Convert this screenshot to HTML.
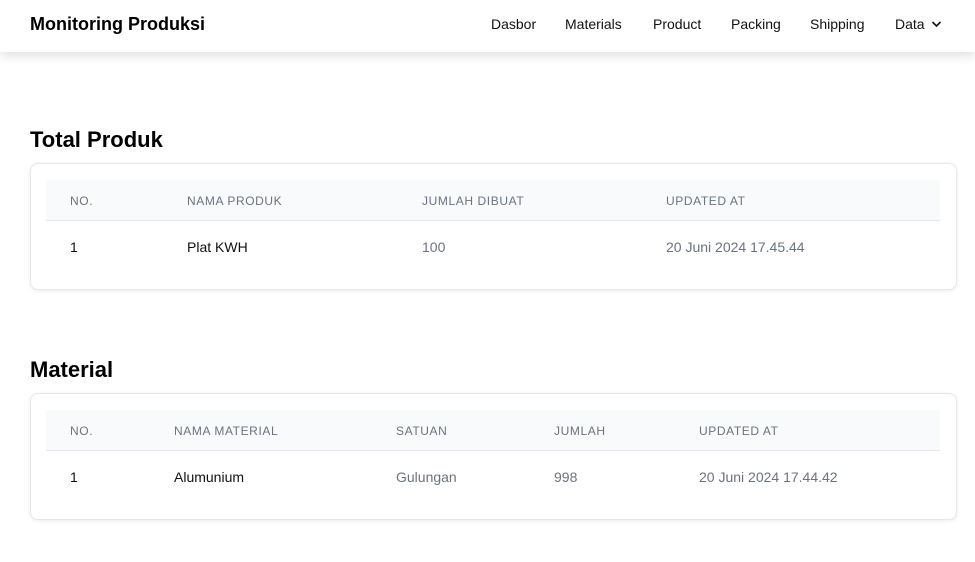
<!DOCTYPE html>
<html><head><meta charset="utf-8"><style>
*{margin:0;padding:0;box-sizing:border-box}
body{width:975px;height:562px;background:#fff;font-family:"Liberation Sans",sans-serif;position:relative;overflow:hidden;color:#111827}
.nav{position:absolute;left:0;top:0;width:975px;height:52px;background:#fff;box-shadow:0 4px 10px rgba(0,0,0,.12);z-index:2}
.t{position:absolute;white-space:nowrap;line-height:1}
.brand{left:30px;top:15px;font-size:18px;font-weight:bold;color:#000}
.ni{top:17px;font-size:14px;color:#111}
h2{position:absolute;left:30px;font-size:22px;font-weight:bold;color:#000;line-height:1}
.card{position:absolute;left:30px;width:927px;height:127px;border:1px solid #e5e7eb;border-radius:8px;box-shadow:0 1px 4px rgba(0,0,0,.08);background:#fff}
.hd{position:absolute;left:15px;top:16px;width:894px;height:41px;background:#f9fafb;border-bottom:1px solid #e5e7eb}
.h{font-size:12px;color:#6b7280;letter-spacing:.6px}
.c{font-size:14px;top:76px}
.g{color:#6b7280}
.b{color:#111;font-weight:500}
</style></head><body>
<div class="nav">
<div class="t brand">Monitoring Produksi</div>
<div class="t ni" style="left:491px">Dasbor</div>
<div class="t ni" style="left:565px">Materials</div>
<div class="t ni" style="left:653px">Product</div>
<div class="t ni" style="left:731px">Packing</div>
<div class="t ni" style="left:810px">Shipping</div>
<div class="t ni" style="left:895px">Data</div>
<svg style="position:absolute;left:931px;top:20px" width="11" height="8" viewBox="0 0 11 8"><path d="M1.5 2l4 4 4-4" fill="none" stroke="#111" stroke-width="1.6"/></svg>
</div>
<h2 style="top:129px">Total Produk</h2>
<div class="card" style="top:163px">
<div class="hd"></div>
<div class="t h" style="left:39px;top:31px">NO.</div>
<div class="t h" style="left:156px;top:31px">NAMA PRODUK</div>
<div class="t h" style="left:391px;top:31px">JUMLAH DIBUAT</div>
<div class="t h" style="left:635px;top:31px">UPDATED AT</div>
<div class="t c b" style="left:39px">1</div>
<div class="t c b" style="left:156px">Plat KWH</div>
<div class="t c g" style="left:391px">100</div>
<div class="t c g" style="left:635px">20 Juni 2024 17.45.44</div>
</div>
<h2 style="top:359px">Material</h2>
<div class="card" style="top:393px">
<div class="hd"></div>
<div class="t h" style="left:39px;top:31px">NO.</div>
<div class="t h" style="left:143px;top:31px">NAMA MATERIAL</div>
<div class="t h" style="left:365px;top:31px">SATUAN</div>
<div class="t h" style="left:523px;top:31px">JUMLAH</div>
<div class="t h" style="left:668px;top:31px">UPDATED AT</div>
<div class="t c b" style="left:39px">1</div>
<div class="t c b" style="left:143px">Alumunium</div>
<div class="t c g" style="left:365px">Gulungan</div>
<div class="t c g" style="left:523px">998</div>
<div class="t c g" style="left:668px">20 Juni 2024 17.44.42</div>
</div>
</body></html>
